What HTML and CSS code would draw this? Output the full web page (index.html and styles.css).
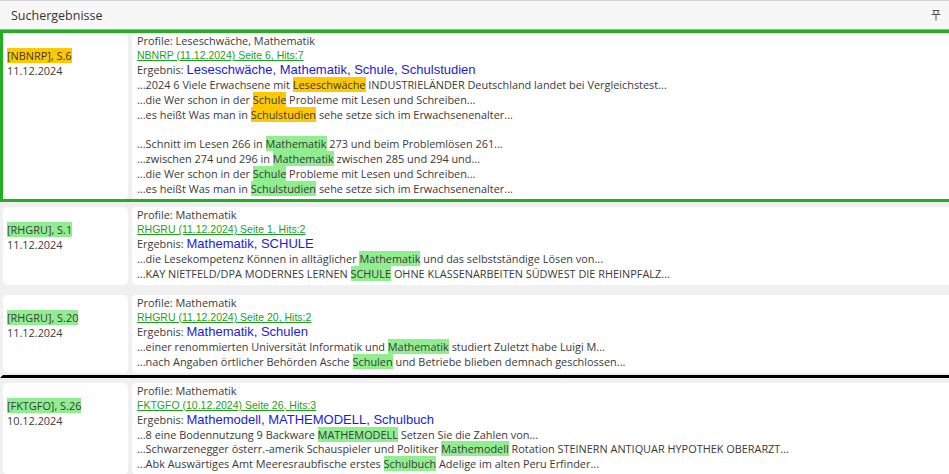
FILE: index.html
```html
<!DOCTYPE html>
<html lang="de">
<head>
    <meta charset="UTF-8">
    <meta name="viewport" content="width=device-width, initial-scale=1.0">
    <title>Suchergebnisse</title>
    <link rel="stylesheet" href="styles.css">
</head>
<body>
    <div id="panel">
        <div class="panel-header">
            <span class="panel-title">Suchergebnisse</span>
            <svg class="pin" width="10" height="12" viewBox="0 0 10 12">
                <path d="M1.5 1.5h7M3 1.5v4M7 1.5v4M0.5 5.5h9M5 5.5v6" stroke="#555" stroke-width="1" fill="none"/>
            </svg>
        </div>

        <div class="results">
            <div class="row selected">
                <div class="source">
                    <div><span class="hl-y">[NBNRP], S.6</span></div>
                    <div>11.12.2024</div>
                </div>
                <div class="hit">
                    <div class="profile">Profile: Leseschwäche, Mathematik</div>
                    <div class="link"><a href="#">NBNRP (11.12.2024) Seite 6, Hits:7</a></div>
                    <div class="result">Ergebnis: <span class="terms">Leseschwäche, Mathematik, Schule, Schulstudien</span></div>
                    <div class="snip">...2024 6 Viele Erwachsene mit <span class="hl-y">Leseschwäche</span> INDUSTRIELÄNDER Deutschland landet bei Vergleichstest...</div>
                    <div class="snip">...die Wer schon in der <span class="hl-y">Schule</span> Probleme mit Lesen und Schreiben...</div>
                    <div class="snip">...es heißt Was man in <span class="hl-y">Schulstudien</span> sehe setze sich im Erwachsenenalter...</div>
                    <div class="snip">&nbsp;</div>
                    <div class="snip">...Schnitt im Lesen 266 in <span class="hl-g">Mathematik</span> 273 und beim Problemlösen 261...</div>
                    <div class="snip">...zwischen 274 und 296 in <span class="hl-g">Mathematik</span> zwischen 285 und 294 und...</div>
                    <div class="snip">...die Wer schon in der <span class="hl-g">Schule</span> Probleme mit Lesen und Schreiben...</div>
                    <div class="snip">...es heißt Was man in <span class="hl-g">Schulstudien</span> sehe setze sich im Erwachsenenalter...</div>
                </div>
            </div>

            <div class="row">
                <div class="source">
                    <div><span class="hl-g">[RHGRU], S.1</span></div>
                    <div>11.12.2024</div>
                </div>
                <div class="hit">
                    <div class="profile">Profile: Mathematik</div>
                    <div class="link"><a href="#">RHGRU (11.12.2024) Seite 1, Hits:2</a></div>
                    <div class="result">Ergebnis: <span class="terms">Mathematik, SCHULE</span></div>
                    <div class="snip">...die Lesekompetenz Können in alltäglicher <span class="hl-g">Mathematik</span> und das selbstständige Lösen von...</div>
                    <div class="snip">...KAY NIETFELD/DPA MODERNES LERNEN <span class="hl-g">SCHULE</span> OHNE KLASSENARBEITEN SÜDWEST DIE RHEINPFALZ...</div>
                </div>
            </div>

            <div class="row day-end">
                <div class="source">
                    <div><span class="hl-g">[RHGRU], S.20</span></div>
                    <div>11.12.2024</div>
                </div>
                <div class="hit">
                    <div class="profile">Profile: Mathematik</div>
                    <div class="link"><a href="#">RHGRU (11.12.2024) Seite 20, Hits:2</a></div>
                    <div class="result">Ergebnis: <span class="terms">Mathematik, Schulen</span></div>
                    <div class="snip">...einer renommierten Universität Informatik und <span class="hl-g">Mathematik</span> studiert Zuletzt habe Luigi M...</div>
                    <div class="snip">...nach Angaben örtlicher Behörden Asche <span class="hl-g">Schulen</span> und Betriebe blieben demnach geschlossen...</div>
                </div>
            </div>

            <div class="row">
                <div class="source">
                    <div><span class="hl-g">[FKTGFO], S.26</span></div>
                    <div>10.12.2024</div>
                </div>
                <div class="hit">
                    <div class="profile">Profile: Mathematik</div>
                    <div class="link"><a href="#">FKTGFO (10.12.2024) Seite 26, Hits:3</a></div>
                    <div class="result">Ergebnis: <span class="terms">Mathemodell, MATHEMODELL, Schulbuch</span></div>
                    <div class="snip">...8 eine Bodennutzung 9 Backware <span class="hl-g">MATHEMODELL</span> Setzen Sie die Zahlen von...</div>
                    <div class="snip">...Schwarzenegger österr.-amerik Schauspieler und Politiker <span class="hl-g">Mathemodell</span> Rotation STEINERN ANTIQUAR HYPOTHEK OBERARZT...</div>
                    <div class="snip">...Abk Auswärtiges Amt Meeresraubfische erstes <span class="hl-g">Schulbuch</span> Adelige im alten Peru Erfinder...</div>
                </div>
            </div>
        </div>
    </div>
</body>
</html>
```

FILE: styles.css
```css
body {
    margin: 0;
    font-family: "Open Sans", "Noto Sans", sans-serif;
    font-size: 10.9px;
    color: #3a3a3a;
    background-color: #f0f0f0;
    overflow: hidden;
}
#panel {
    width: 949px;
    height: 474px;
    overflow: hidden;
}
.panel-header {
    display: flex;
    align-items: center;
    justify-content: space-between;
    height: 28px;
    padding: 0 8px 0 11px;
    background: #f7f7f7;
    border-top: 1px solid #d4d4d4;
    border-bottom: 1px solid #a8a8a8;
}
.panel-title {
    font-size: 12.5px;
    color: #333;
}
.pin {
    display: block;
}
.results {
    width: 960px;  /* breiter als das Fenster, rechter Rand abgeschnitten */
}
.row {
    display: flex;
    gap: 4px;
    border: 3px solid transparent;
    border-right: none;
    padding: 2px 0;
}
.row.selected {
    border: 3px solid #22b022;
    padding: 0;
}
.row.day-end {
    border-bottom-color: #000;
}
.source {
    width: 117px;
    flex-shrink: 0;
    background: white;
    border-radius: 5px;
    padding: 15px 4px 0 4px;
    line-height: 15px;
}
.hit {
    flex: 1;
    background: white;
    border-radius: 5px;
    padding: 1px 5px 3px 5px;
}
.profile {
    line-height: 14px;
}
.link {
    line-height: 13px;
}
.link a {
    font-family: "Liberation Sans", Arial, sans-serif;
    font-size: 10.5px;
    color: #1f9e1f;
}
.result {
    line-height: 16px;
}
.terms {
    font-family: "Liberation Sans", Arial, sans-serif;
    font-size: 13px;
    color: #1c1cd6;
}
.snip {
    line-height: 14.8px;
    white-space: nowrap;
}
.hl-y {
    background: #ffc800;
}
.hl-g {
    background: #90ee90;
}
```
